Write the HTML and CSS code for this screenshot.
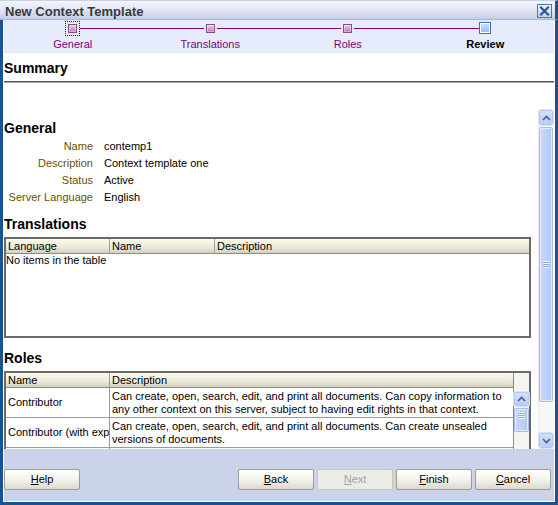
FILE: index.html
```html
<!DOCTYPE html>
<html>
<head>
<meta charset="utf-8">
<link rel="stylesheet" href="styles.css">
</head>
<body>
<div class="window">
  <div class="titlebar">
    <span class="title">New Context Template</span>
    <span class="close">
      <svg width="11" height="10" viewBox="0 0 11 10"><path d="M2 1.5 L9 8.5 M9 1.5 L2 8.5" stroke="#2a5597" stroke-width="2.2" stroke-linecap="square"/><rect x="4" y="3.5" width="3" height="3" fill="#2a5597"/></svg>
    </span>
  </div>
  <div class="frame">
    <div class="train">
      <div class="step">
        <div class="track"><span class="seg none"></span><span class="focus"><span class="node"></span></span><span class="seg"></span></div>
        <div class="label">General</div>
      </div>
      <div class="step">
        <div class="track"><span class="seg"></span><span class="node gap"></span><span class="seg"></span></div>
        <div class="label">Translations</div>
      </div>
      <div class="step">
        <div class="track"><span class="seg"></span><span class="node gap"></span><span class="seg"></span></div>
        <div class="label">Roles</div>
      </div>
      <div class="step">
        <div class="track"><span class="seg"></span><span class="node current"></span><span class="seg none"></span></div>
        <div class="label current">Review</div>
      </div>
    </div>
    <div class="summary">Summary</div>
    <div class="rule"></div>
    <div class="body">
      <div class="content">
        <div class="sec first">General</div>
        <div class="props">
          <div class="pl">Name</div><div class="pv">contemp1</div>
          <div class="pl">Description</div><div class="pv">Context template one</div>
          <div class="pl">Status</div><div class="pv">Active</div>
          <div class="pl">Server Language</div><div class="pv">English</div>
        </div>
        <div class="sec">Translations</div>
        <div class="tbl">
          <div class="thead three">
            <div class="th">Language</div><div class="th">Name</div><div class="th last">Description</div>
          </div>
          <div class="empty">No items in the table</div>
        </div>
        <div class="sec roles-h">Roles</div>
        <div class="tbl roles">
          <div class="rmain">
            <div class="thead two">
              <div class="th">Name</div><div class="th last">Description</div>
            </div>
            <div class="row">
              <div class="cname">Contributor</div>
              <div class="cdesc">Can create, open, search, edit, and print all documents. Can copy information to<br>any other context on this server, subject to having edit rights in that context.</div>
            </div>
            <div class="row">
              <div class="cname">Contributor (with exports)</div>
              <div class="cdesc">Can create, open, search, edit, and print all documents. Can create unsealed<br>versions of documents.</div>
            </div>
            <div class="row tail"></div>
          </div>
          <div class="rscroll">
            <div class="sbtn small">
              <svg width="9" height="6" viewBox="0 0 9 6"><path d="M1 5 L4.5 1.5 L8 5" fill="none" stroke="#4a5f88" stroke-width="1.7"/></svg>
            </div>
            <div class="thumb small"><span class="grip"></span></div>
          </div>
        </div>
      </div>
      <div class="vscroll">
        <div class="sbtn">
          <svg width="9" height="6" viewBox="0 0 9 6"><path d="M1 5 L4.5 1.5 L8 5" fill="none" stroke="#4a5f88" stroke-width="1.7"/></svg>
        </div>
        <div class="thumb main"><span class="grip"></span></div>
        <div class="strack"></div>
        <div class="sbtn">
          <svg width="9" height="6" viewBox="0 0 9 6"><path d="M1 1 L4.5 4.5 L8 1" fill="none" stroke="#4a5f88" stroke-width="1.7"/></svg>
        </div>
      </div>
    </div>
    <div class="footer">
      <div class="btn"><u>H</u>elp</div>
      <div class="spacer"></div>
      <div class="group">
        <div class="btn"><u>B</u>ack</div>
        <div class="btn disabled"><u>N</u>ext</div>
        <div class="btn"><u>F</u>inish</div>
        <div class="btn"><u>C</u>ancel</div>
      </div>
    </div>
  </div>
</div>
</body>
</html>
```
FILE: styles.css
```css
* { box-sizing: border-box; }
html, body { margin: 0; padding: 0; }
body {
  width: 558px; height: 505px; overflow: hidden;
  font-family: "Liberation Sans", Arial, sans-serif;
  font-size: 11px; color: #000; background: #fff;
}
.window { width: 558px; height: 505px; display: flex; flex-direction: column; }

.titlebar {
  height: 20px; flex: none;
  display: flex; align-items: flex-start; justify-content: space-between;
  padding: 3px 3px 0 5px;
  background: linear-gradient(#f4f6fc, #e2e6f4 45%, #c6cde8);
  border-bottom: 1px solid #aab5d6;
  border-right: 3px solid #1b5390;
  border-top: 1px solid #c9d0e6;
}
.title { font-weight: bold; font-size: 13px; line-height: 16px; color: #3a3a3a; }
.close {
  width: 15px; height: 14px;
  border: 1px solid #4f74ac;
  background: linear-gradient(#eef3fc, #c2d3ef);
  display: flex; align-items: center; justify-content: center;
}

.frame {
  flex: 1; display: flex; flex-direction: column;
  border-left: 3px solid #1b5390; border-right: 3px solid #1b5390; border-bottom: 3px solid #1b5390;
  padding: 0 1px 1px 1px; background: #fff;
}

.train {
  height: 33px; flex: none; background: #e6ecfb;
  display: grid; grid-template-columns: repeat(4, 1fr);
  padding-top: 1px;
}
.step { display: flex; flex-direction: column; }
.track { height: 14px; display: flex; align-items: center; }
.seg { flex: 1; height: 1px; background: #800080; }
.seg.none { background: transparent; }
.node {
  width: 9px; height: 9px; flex: none;
  border: 1px solid #8c4c8a;
  background: linear-gradient(#ecd0e8, #b77db2);
  box-shadow: inset 0 0 0 1px rgba(255,255,255,0.35);
}
.node.gap { margin: 0 2px; }
.focus { border: 1px dotted #0000ff; padding: 2px; display: flex; flex: none; }
.node.current {
  width: 12px; height: 12px;
  border: 1px solid #3b6ed8;
  background: linear-gradient(#d6e5fc, #94b6ef);
  box-shadow: inset 0 0 0 1px #fff;
}
.label { margin-top: 3px; line-height: 13px; text-align: center; color: #800080; }
.label.current { color: #000; font-weight: bold; }

.summary { margin-top: 7px; font-weight: bold; font-size: 14px; line-height: 16px; }
.rule { margin-top: 5px; height: 2px; border-top: 1px solid #565656; border-bottom: 1px solid #a8a8a8; flex: none; }

.body { height: 366px; flex: none; display: flex; overflow: hidden; }
.content { flex: 1; min-width: 0; padding: 37px 7px 0 0; overflow: hidden; }
.sec { font-weight: bold; font-size: 14px; line-height: 16px; margin: 10px 0 5px; }
.sec.first { margin: 0 0 2px; }
.sec.roles-h { margin-top: 12px; }
.props { display: grid; grid-template-columns: 89px 1fr; column-gap: 11px; line-height: 17px; }
.pl { text-align: right; color: #6c4f00; white-space: nowrap; }

.tbl { border: 2px solid #6a6a6a; }
.thead {
  height: 15px; display: grid;
  background: linear-gradient(#fcfbea, #ecead8 55%, #d4d1c0);
  border-bottom: 1px solid #8e8c7e;
}
.thead.three { grid-template-columns: 104px 105px 1fr; }
.thead.two { grid-template-columns: 104px 1fr; }
.th { line-height: 14px; padding-left: 2px; border-right: 1px solid #a4a294; white-space: nowrap; overflow: hidden; }
.th.last { border-right: none; }
.empty { height: 82px; line-height: 13px; padding-left: 0; }

.roles { display: flex; }
.rmain { flex: 1; min-width: 0; border-right: 1px solid #8a8a8a; }
.row { display: grid; grid-template-columns: 104px 1fr; border-bottom: 1px solid #9a9a9a; }
.row.tail { height: 30px; border-bottom: none; }
.row.tail::before { content: ""; border-right: 1px solid #9a9a9a; }
.cname {
  border-right: 1px solid #9a9a9a; padding-left: 2px;
  white-space: nowrap; overflow: hidden;
  display: flex; align-items: center; line-height: 13px;
}
.cdesc { padding: 2px 0 1px 2px; line-height: 13px; white-space: nowrap; overflow: hidden; }
.rscroll { width: 15px; flex: none; background: #f4f4f0; padding-top: 19px; display: flex; flex-direction: column; }

.sbtn {
  height: 15px; flex: none;
  border: 1px solid #fff; border-radius: 2px;
  outline: 1px solid #b4c5ee; outline-offset: -1px;
  background: linear-gradient(#d3dffc, #bacdf9);
  box-shadow: 0 0 0 1px #dce5f8;
  display: flex; align-items: center; justify-content: center;
}
.sbtn.small { height: 14px; }
.thumb {
  margin-top: 2px; flex: none;
  border: 1px solid #a8bcef; border-radius: 2px;
  background: linear-gradient(90deg, #cad8fd, #bccffa 60%, #b4c8f6);
  box-shadow: inset 0 0 0 1px #e4ebfe;
  display: flex; align-items: center; justify-content: center;
}
.thumb.main { height: 275px; }
.thumb.small { height: 24px; align-items: flex-start; padding-top: 3px; }
.grip {
  width: 7px; height: 7px;
  background: repeating-linear-gradient(#f2f6ff 0 1px, #8fa8e6 1px 2px);
}
.vscroll {
  width: 15px; flex: none; margin: 27px 1px 1px 0;
  display: flex; flex-direction: column;
  background: #f6f6f3;
  border-left: 1px solid #ececec;
}
.strack { flex: 1; }

.footer {
  height: 52px; flex: none; background: #cbd3eb;
  display: flex; align-items: flex-start; padding: 20px 3px 0 0;
}
.spacer { flex: 1; }
.group { display: flex; gap: 3px; }
.btn {
  width: 76px; height: 21px;
  border: 1px solid #9d9d92; border-radius: 2px;
  background: linear-gradient(#ffffff, #f3f3ee 50%, #dbd9cf);
  text-align: center; line-height: 19px; color: #000;
}
.btn.disabled { background: #ecebe6; border-color: #c9c8bf; color: #a2a2a2; }
```
